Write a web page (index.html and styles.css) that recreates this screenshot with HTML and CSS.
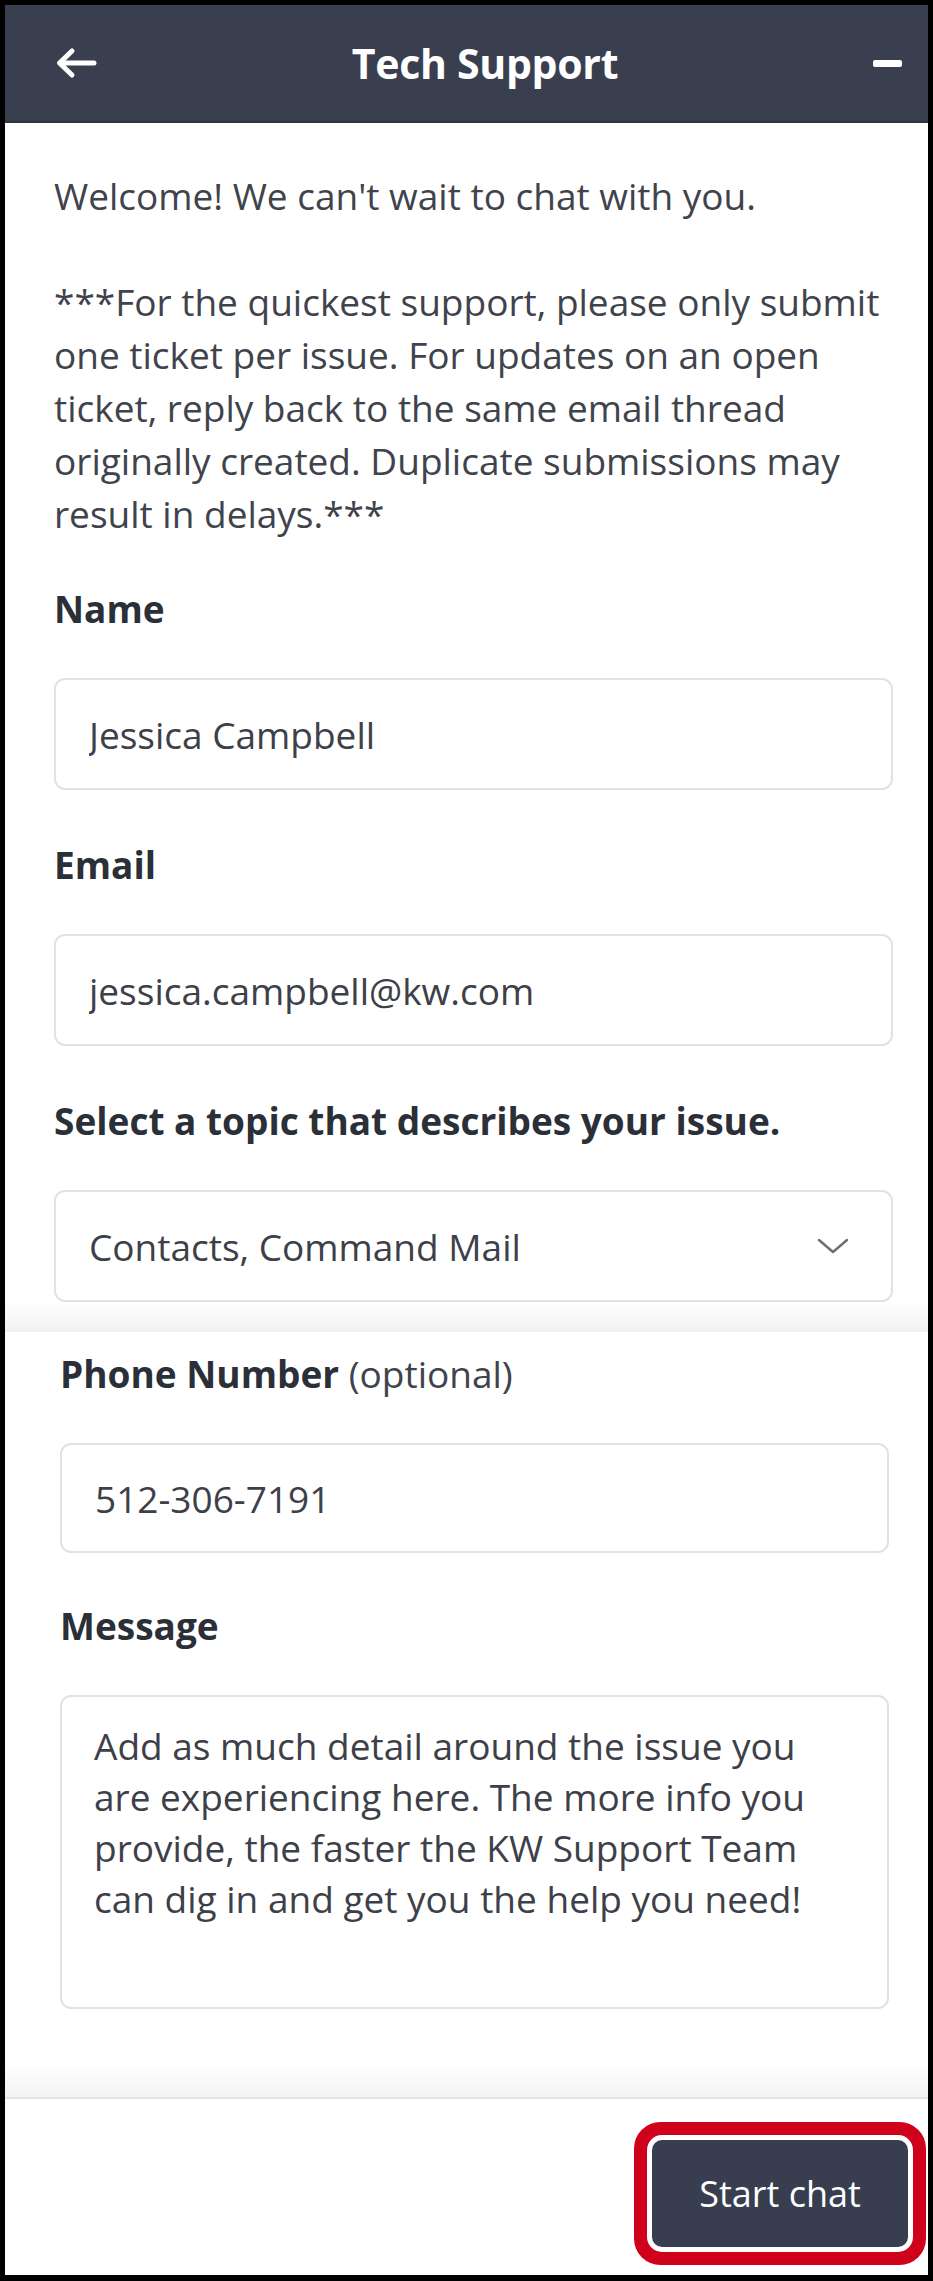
FILE: index.html
```html
<!DOCTYPE html>
<html lang="en">
<head>
    <meta charset="UTF-8">
    <meta name="viewport" content="width=device-width, initial-scale=1.0">
    <title>Tech Support</title>
    <link rel="stylesheet" href="styles.css">
</head>
<body>

    <div class="widget">
        <header class="topbar">
            <button class="icon-btn" aria-label="Back">
                <svg width="42" height="32" viewBox="0 0 42 32">
                    <path d="M39 16H5M17 4L4.5 16L17 28" fill="none" stroke="#fff" stroke-width="5" stroke-linecap="round" stroke-linejoin="round"/>
                </svg>
            </button>
            <h1>Tech Support</h1>
            <button class="icon-btn" aria-label="Minimize"><span class="dash"></span></button>
        </header>

        <div class="content">
            <div class="upper">
                <div class="intro">
                    <p>Welcome! We can't wait to chat with you.</p>
                    <p>***For the quickest support, please only submit one ticket per issue. For updates on an open ticket, reply back to the same email thread originally created. Duplicate submissions may result in delays.***</p>
                </div>

                <div class="field">
                    <label for="name">Name</label>
                    <input class="input" type="text" id="name" value="Jessica Campbell">
                </div>

                <div class="field">
                    <label for="email">Email</label>
                    <input class="input" type="email" id="email" value="jessica.campbell@kw.com">
                </div>

                <div class="field">
                    <label for="topic">Select a topic that describes your issue.</label>
                    <div class="select-wrap">
                        <select class="input" id="topic">
                            <option selected>Contacts, Command Mail</option>
                        </select>
                        <svg class="chevron" width="32" height="16" viewBox="0 0 32 16">
                            <path d="M2 2L16 14L30 2" fill="none" stroke="#6b7079" stroke-width="2.5" stroke-linecap="round" stroke-linejoin="round"/>
                        </svg>
                    </div>
                </div>
            </div>

            <div class="seam"></div>

            <div class="lower">
                <div class="field">
                    <label for="phone">Phone Number <span class="optional">(optional)</span></label>
                    <input class="input short" type="tel" id="phone" value="512-306-7191">
                </div>

                <div class="field">
                    <label for="message">Message</label>
                    <textarea class="input message" id="message" placeholder="Add as much detail around the issue you are experiencing here. The more info you provide, the faster the KW Support Team can dig in and get you the help you need!"></textarea>
                </div>
            </div>

            <div class="fade"></div>
        </div>

        <footer class="footer">
            <button class="start-btn">Start chat</button>
        </footer>
    </div>

</body>
</html>
```

FILE: styles.css
```css
* {
    box-sizing: border-box;
}
html, body {
    margin: 0;
    padding: 0;
}
body {
    font-family: "Open Sans", "Noto Sans", Arial, sans-serif;
    background: #fff;
    color: #3f434b;
}
.widget {
    height: 2281px;
    border: 5px solid #000;
    border-bottom-width: 6px;
    display: flex;
    flex-direction: column;
    background: #fff;
}

/* header */
.topbar {
    height: 118px;
    flex-shrink: 0;
    background: #393f4f;
    border-bottom: 2px solid #2f3443;
    display: grid;
    grid-template-columns: auto 1fr auto;
    align-items: center;
    padding: 0 26px 0 50px;
}
.topbar h1 {
    margin: 0;
    text-align: center;
    color: #fff;
    font-size: 41px;
    font-weight: 700;
    letter-spacing: -0.3px;
}
.icon-btn {
    background: none;
    border: none;
    padding: 0;
    display: flex;
    align-items: center;
    cursor: pointer;
}
.dash {
    display: block;
    width: 29px;
    height: 7px;
    border-radius: 2px;
    background: #fff;
}

/* body */
.content {
    flex: 1;
    display: flex;
    flex-direction: column;
}
.upper {
    padding: 46px 35px 0 49px;
}
.intro {
    margin-right: -6px;
    margin-bottom: 42px;
}
.intro p {
    margin: 0;
    font-size: 37px;
    line-height: 53px;
}
.intro p + p {
    margin-top: 53px;
}
.field {
    margin-bottom: 48px;
}
.field:last-child {
    margin-bottom: 0;
}
.field label {
    display: block;
    font-size: 37px;
    line-height: 53px;
    font-weight: 700;
    color: #2b2f38;
    margin-bottom: 43px;
}
.optional {
    font-weight: 400;
    color: #3f434b;
}
.input {
    display: block;
    width: 100%;
    height: 112px;
    border: 2px solid #dfe2e6;
    border-radius: 11px;
    padding: 0 33px;
    font-family: inherit;
    font-size: 37px;
    color: #3d4048;
    background: #fff;
    outline: none;
}
.select-wrap {
    position: relative;
}
select.input {
    appearance: none;
    -webkit-appearance: none;
}
.chevron {
    position: absolute;
    right: 44px;
    top: 48px;
    pointer-events: none;
}
.seam {
    height: 30px;
    background: linear-gradient(#fff, #f1f1f1);
}
.lower {
    padding: 15px 39px 0 55px;
}
.lower .field {
    margin-bottom: 46px;
}
.lower .field:last-child {
    margin-bottom: 0;
}
.lower label {
    margin-bottom: 43px;
}
.input.short {
    height: 110px;
}
.message {
    height: 314px;
    padding: 23px 32px;
    line-height: 51px;
    resize: none;
}
.message::placeholder {
    color: #3d4048;
    opacity: 1;
}
.fade {
    margin-top: auto;
    height: 34px;
    background: linear-gradient(#fff, #f3f3f3);
}

/* footer */
.footer {
    height: 178px;
    flex-shrink: 0;
    border-top: 2px solid #e5e6e8;
    display: flex;
    justify-content: flex-end;
    align-items: flex-start;
    padding: 41px 20px 0 0;
}
.start-btn {
    width: 256px;
    height: 107px;
    border: none;
    border-radius: 10px;
    background: #383e4f;
    color: #fff;
    font-family: inherit;
    font-size: 36px;
    cursor: pointer;
    box-shadow: 0 0 0 5px #fff, 0 0 0 18px #d0021b;
}
```
